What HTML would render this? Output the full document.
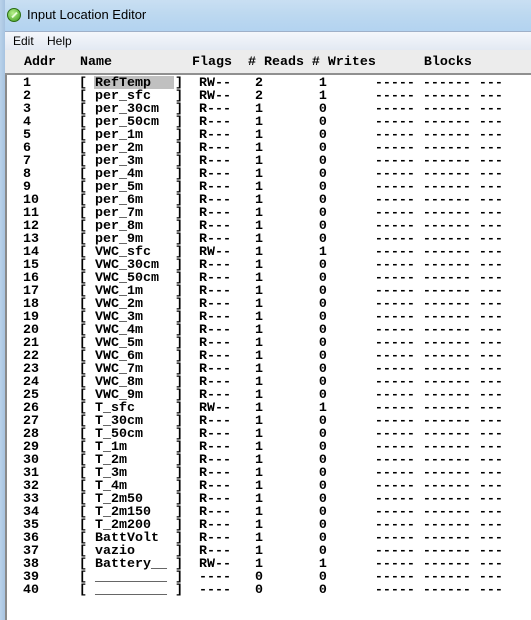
<!DOCTYPE html>
<html><head><style>
html,body{margin:0;padding:0;width:531px;height:620px;overflow:hidden;background:#fff}
.title{position:absolute;left:0;top:0;width:531px;height:31px;background:linear-gradient(180deg,#c9dff2 0%,#bcd8f0 50%,#b3d3f0 100%);font-family:"Liberation Sans",sans-serif;font-size:13px;color:#000}
.title span{position:absolute;left:27px;top:7px}
.icon{position:absolute;left:7px;top:8px;width:14px;height:14px;border-radius:50%;background:radial-gradient(circle at 40% 35%,#b6f08a,#3a9a1c);border:1px solid #2b6e14;box-sizing:border-box}
.icon:after{content:"";position:absolute;left:3px;top:5px;width:7px;height:2px;background:#e8ffd8;transform:rotate(-45deg)}
.menu{position:absolute;left:5px;top:31px;width:526px;height:19px;background:linear-gradient(180deg,#f5f7fb,#e2e8f2);font-family:"Liberation Sans",sans-serif;font-size:12px;border-top:1px solid #9fb0c8}
.menu span{position:absolute;top:2px}
.hdr{position:absolute;left:5px;top:50px;width:526px;height:25px;background:#ececec;border-bottom:2px solid #909090;box-sizing:border-box}
.lb{position:absolute;left:0;top:0;width:5px;height:620px;background:linear-gradient(90deg,#b9d2ea,#a7c3e0)}
.lb2{position:absolute;left:5px;top:75px;width:2px;height:545px;background:#8a8a8a}
pre{margin:0;position:absolute;left:23px;font-family:"Liberation Mono",monospace;font-weight:bold;font-size:13.33px;line-height:13px;color:#000;white-space:pre}
.hl{position:absolute;left:94px;top:76px;width:80px;height:13px;background:#c0c0c0}
</style></head><body>
<div class="title"><div class="icon"></div><span>Input Location Editor</span></div>
<div class="lb"></div>
<div class="menu"><span style="left:8px">Edit</span><span style="left:42px">Help</span></div>
<div class="hdr"></div>
<div class="lb2"></div>
<pre style="top:56px;left:24px">Addr   Name          Flags  # Reads # Writes      Blocks</pre>
<div class="hl"></div>
<pre style="top:77px">1      [ RefTemp   ]  RW--   2       1      ----- ------ ---
2      [ per_sfc   ]  RW--   2       1      ----- ------ ---
3      [ per_30cm  ]  R---   1       0      ----- ------ ---
4      [ per_50cm  ]  R---   1       0      ----- ------ ---
5      [ per_1m    ]  R---   1       0      ----- ------ ---
6      [ per_2m    ]  R---   1       0      ----- ------ ---
7      [ per_3m    ]  R---   1       0      ----- ------ ---
8      [ per_4m    ]  R---   1       0      ----- ------ ---
9      [ per_5m    ]  R---   1       0      ----- ------ ---
10     [ per_6m    ]  R---   1       0      ----- ------ ---
11     [ per_7m    ]  R---   1       0      ----- ------ ---
12     [ per_8m    ]  R---   1       0      ----- ------ ---
13     [ per_9m    ]  R---   1       0      ----- ------ ---
14     [ VWC_sfc   ]  RW--   1       1      ----- ------ ---
15     [ VWC_30cm  ]  R---   1       0      ----- ------ ---
16     [ VWC_50cm  ]  R---   1       0      ----- ------ ---
17     [ VWC_1m    ]  R---   1       0      ----- ------ ---
18     [ VWC_2m    ]  R---   1       0      ----- ------ ---
19     [ VWC_3m    ]  R---   1       0      ----- ------ ---
20     [ VWC_4m    ]  R---   1       0      ----- ------ ---
21     [ VWC_5m    ]  R---   1       0      ----- ------ ---
22     [ VWC_6m    ]  R---   1       0      ----- ------ ---
23     [ VWC_7m    ]  R---   1       0      ----- ------ ---
24     [ VWC_8m    ]  R---   1       0      ----- ------ ---
25     [ VWC_9m    ]  R---   1       0      ----- ------ ---
26     [ T_sfc     ]  RW--   1       1      ----- ------ ---
27     [ T_30cm    ]  R---   1       0      ----- ------ ---
28     [ T_50cm    ]  R---   1       0      ----- ------ ---
29     [ T_1m      ]  R---   1       0      ----- ------ ---
30     [ T_2m      ]  R---   1       0      ----- ------ ---
31     [ T_3m      ]  R---   1       0      ----- ------ ---
32     [ T_4m      ]  R---   1       0      ----- ------ ---
33     [ T_2m50    ]  R---   1       0      ----- ------ ---
34     [ T_2m150   ]  R---   1       0      ----- ------ ---
35     [ T_2m200   ]  R---   1       0      ----- ------ ---
36     [ BattVolt  ]  R---   1       0      ----- ------ ---
37     [ vazio     ]  R---   1       0      ----- ------ ---
38     [ Battery__ ]  RW--   1       1      ----- ------ ---
39     [ _________ ]  ----   0       0      ----- ------ ---
40     [ _________ ]  ----   0       0      ----- ------ ---</pre>
</body></html>
